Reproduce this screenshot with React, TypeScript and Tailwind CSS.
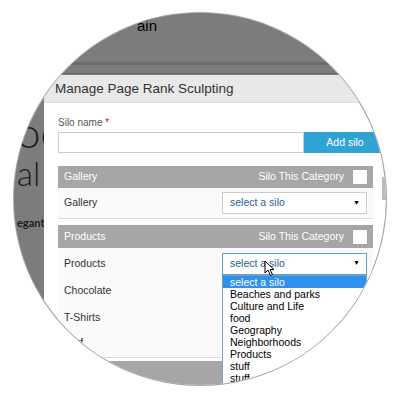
const silos = [
  "select a silo",
  "Beaches and parks",
  "Culture and Life",
  "food",
  "Geography",
  "Neighborhoods",
  "Products",
  "stuff",
  "stuff",
  "things",
];

const SiloSelect = ({ open }: { open?: boolean }) => (
  <div
    className={
      "relative w-[145px] h-[22px] bg-white flex items-center justify-between pl-[7px] pr-[6px] border " +
      (open ? "border-[#52a8da]" : "border-[#cccccc]")
    }
  >
    <span className="text-[#2d5d8a]">select a silo</span>
    <span className="text-black text-[7px]">▼</span>
    {open && (
      <>
        <svg
          className="absolute left-[41px] top-[6px] z-20"
          width="11"
          height="17"
          viewBox="0 0 11 17"
        >
          <path
            d="M1 1 L1 13 L4 10 L6.5 15.5 L8.5 14.5 L6 9.5 L10 9.5 Z"
            fill="white"
            stroke="black"
            strokeWidth="1"
            strokeLinejoin="round"
          />
        </svg>
        <div className="absolute left-[-1px] top-[21px] w-[145px] bg-white border border-[#7f9db9] z-10 text-black leading-[12px]">
          {silos.map((s, i) => (
            <div
              key={i}
              className={"pl-[7px] " + (i === 0 ? "bg-[#3090f0] text-white" : "")}
            >
              {s}
            </div>
          ))}
        </div>
      </>
    )}
  </div>
);

const CategoryHeader = ({ name, h }: { name: string; h: string }) => (
  <div className={"bg-[#a6a6a6] text-white flex items-center justify-between px-[6px] " + h}>
    <span>{name}</span>
    <div className="flex items-center gap-[9px]">
      <span>Silo This Category</span>
      <div className="w-[14px] h-[14px] bg-white" />
    </div>
  </div>
);

export default function App() {
  return (
    <div className="w-[400px] h-[400px] bg-white pt-[13px] pl-[14px] font-['Liberation_Sans',Arial,sans-serif]">
      <div className="w-[372px] h-[372px] rounded-full overflow-hidden ring-1 ring-[#a8a8a8] bg-[#7c7c7c] flex flex-col">
        {/* page behind the modal */}
        <div className="shrink-0 h-[49px] pl-[123px] pt-[5px] text-[15px] text-black leading-none">
          ain
        </div>
        <div className="shrink-0 h-[3px] bg-[#6b6b6b]" />
        <div className="shrink-0 h-[8px]" />
        <div className="shrink-0 h-[1px] bg-[#666666]" />
        <div className="shrink-0 h-[1px]" />

        <div className="flex flex-1 min-h-0">
          <div className="w-[30px] shrink-0 overflow-hidden pl-[3px] text-[#1d1d1d] font-['Lato',sans-serif] whitespace-nowrap">
            <div className="mt-[36px] text-[42px] leading-[42px] font-light">oc</div>
            <div className="mt-[3.5px] text-[33px] leading-[33px] font-light">al</div>
            <div className="mt-[26.5px] text-[11px] leading-[14px] font-bold">egant</div>
          </div>

          {/* modal */}
          <div className="relative flex-1 bg-white text-[10.5px] text-[#333]">
            <div className="h-[28px] bg-[#e8e8e8] border-b border-[#dcdcdc] flex items-center pl-[11px] pt-[2px] text-[13.5px] text-[#333]">
              Manage Page Rank Sculpting
            </div>
            <div className="pl-[14px] pt-[13px]">
              <div className="text-[10px] leading-[14px] text-[#555]">
                Silo name <span className="text-[#d00]">*</span>
              </div>
              <div className="mt-[2px] flex h-[21px]">
                <div className="w-[246px] border border-[#cccccc]" />
                <div className="w-[82px] bg-[#2fa4d4] text-white flex items-center justify-center">
                  Add silo
                </div>
              </div>

              <div className="w-[315px] mt-[13px]">
                <CategoryHeader name="Gallery" h="h-[22px]" />
                <div className="h-[31px] bg-[#fafafa] border-b border-[#dcdcdc] flex items-center justify-between px-[6px]">
                  <span>Gallery</span>
                  <SiloSelect />
                </div>

                <div className="mt-[6px]">
                  <CategoryHeader name="Products" h="h-[23px]" />
                  <div className="bg-[#fafafa] border-b border-[#dcdcdc] pt-[2px]">
                    <div className="h-[27px] flex items-center justify-between px-[6px]">
                      <span>Products</span>
                      <SiloSelect open />
                    </div>
                    <div className="h-[26.5px] flex items-center px-[6px] pt-[2px]">Chocolate</div>
                    <div className="h-[26.5px] flex items-center px-[6px] pt-[2px]">T-Shirts</div>
                    <div className="h-[26.5px] flex items-center px-[6px]">Surf</div>
                  </div>
                </div>

                <div className="mt-[3px] h-[30px] bg-[#a6a6a6]" />
              </div>
            </div>
            <div className="absolute right-0 top-[102px] w-[4px] h-[23px] bg-[#bdbdbd]" />
          </div>
        </div>
      </div>
    </div>
  );
}
